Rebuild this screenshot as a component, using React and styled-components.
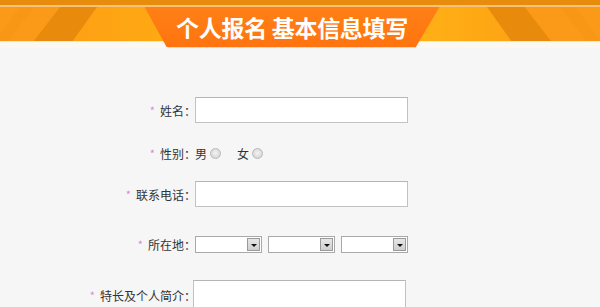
import React from 'react'
import styled, { createGlobalStyle } from 'styled-components'

const GlobalStyle = createGlobalStyle`
  html, body {
    margin: 0;
    padding: 0;
    background: #f6f6f6;
  }
  body {
    font-family: "Noto Sans CJK SC", "Liberation Sans", sans-serif;
    font-size: 12px;
    color: #333;
  }
`

// header
const Header = styled.header`
  display: grid;
  height: 48px;
  overflow: hidden;
`
const Band = styled.svg`
  grid-area: 1 / 1;
  display: block;
`
const TabRow = styled.div`
  grid-area: 1 / 1;
  display: flex;
  justify-content: center;
  padding-top: 7px;
`
const Tab = styled.div`
  width: 295px;
  height: 40px;
  margin-right: 16px;
  background: linear-gradient(#ff8016, #ff7410);
  clip-path: polygon(0 0, 100% 0, 92% 100%, 7.5% 100%);
  display: flex;
  align-items: center;
  justify-content: center;
  box-sizing: border-box;
  color: #fff;
  font-size: 23px;
  font-weight: bold;
  letter-spacing: -0.3px;
  white-space: pre;
`

// form
const Form = styled.div`
  padding-top: 49px;
`
const Row = styled.div`
  display: flex;
  align-items: ${(p) => p.align || 'center'};
  height: ${(p) => p.h}px;
  margin-top: ${(p) => p.mt || 0}px;
`
const Label = styled.div`
  width: 196px;
  margin-right: -1px;
  text-align: right;
  white-space: nowrap;
  padding-top: ${(p) => p.pt || 0}px;
`
const Star = styled.span`
  color: #d58ad5;
  font-size: 11px;
  margin-right: 5px;
  position: relative;
  top: -1px;
`
const TextInput = styled.div`
  width: 211px;
  height: 24px;
  background: #fff;
  border: 1px solid #c2c2c2;
  border-top-color: #b5b5b5;
`
const TextArea = styled.div`
  width: 211px;
  height: 40px;
  margin-left: -2px;
  background: #fff;
  border: 1px solid #c2c2c2;
  border-top-color: #b5b5b5;
`
const Radios = styled.div`
  display: flex;
  align-items: center;
`
const RadioText = styled.span`
  margin-left: ${(p) => p.ml || 0}px;
`
const Radio = styled.span`
  width: 9px;
  height: 9px;
  margin-left: 3px;
  border-radius: 50%;
  border: 1px solid #b9b9b9;
  background: radial-gradient(circle at 50% 45%, #f4f4f4 0, #e2e2e2 45%, #cfcfcf 100%);
`
const Selects = styled.div`
  display: flex;
  gap: 6px;
`
const SelectBox = styled.div`
  width: 64px;
  height: 15px;
  background: #fff;
  border: 1px solid #a9a9a9;
  display: flex;
  justify-content: flex-end;
  align-items: center;
  padding-right: 1px;
`
const SelectBtn = styled.span`
  width: 11px;
  height: 11px;
  border: 1px solid #9a9a9a;
  background: linear-gradient(#e6e6e6, #cfcfcf);
  display: flex;
  align-items: center;
  justify-content: center;
  &::after {
    content: '';
    border-left: 3px solid transparent;
    border-right: 3px solid transparent;
    border-top: 3px solid #111;
    margin-top: 1px;
  }
`

function Banner() {
  return (
    <Band width="600" height="48" viewBox="0 0 600 48">
      <defs>
        <linearGradient id="bg" x1="0" x2="1" y1="0" y2="0">
          <stop offset="0" stopColor="#fd9b16" />
          <stop offset="0.3" stopColor="#ffaa12" />
          <stop offset="0.7" stopColor="#ffb015" />
          <stop offset="1" stopColor="#fd9914" />
        </linearGradient>
      </defs>
      <rect x="0" y="0" width="600" height="48" fill="#fbf8f1" />
      <rect x="0" y="0" width="600" height="6" fill="#e88c0e" />
      <rect x="0" y="5" width="600" height="2" fill="#f6c27a" />
      <rect x="0" y="7" width="600" height="35" fill="url(#bg)" />
      {/* left stripes */}
      <polygon points="0,7 60,7 33,42 0,42" fill="#fb9a18" />
      <polygon points="20,7 34,7 8,42 -6,42" fill="#f79516" opacity="0.6" />
      <polygon points="60,7 97,7 72,42 33,42" fill="#e88b0c" />
      {/* right stripes */}
      <polygon points="487,7 525,7 552,42 512,42" fill="#e88b0c" />
      <polygon points="525,7 600,7 600,42 552,42" fill="#fb9a18" />
      <polygon points="560,7 575,7 602,42 587,42" fill="#f79516" opacity="0.6" />
      <rect x="0" y="41" width="600" height="1" fill="#fde9b8" />
      {/* tab shadow */}
      <polygon points="167,47 417,47 415,48 169,48" fill="#e8d7c4" />
    </Band>
  )
}

export default function App() {
  return (
    <>
      <GlobalStyle />
      <Header>
        <Banner />
        <TabRow>
          <Tab>{'个人报名 基本信息填写'}</Tab>
        </TabRow>
      </Header>
      <Form>
        <Row h={26}>
          <Label><Star>*</Star>姓名：</Label>
          <TextInput />
        </Row>
        <Row h={20} mt={20}>
          <Label><Star>*</Star>性别：</Label>
          <Radios>
            <RadioText>男</RadioText>
            <Radio />
            <RadioText ml={16}>女</RadioText>
            <Radio />
          </Radios>
        </Row>
        <Row h={26} mt={18}>
          <Label><Star>*</Star>联系电话：</Label>
          <TextInput />
        </Row>
        <Row h={17} mt={29}>
          <Label><Star>*</Star>所在地：</Label>
          <Selects>
            <SelectBox><SelectBtn /></SelectBox>
            <SelectBox><SelectBtn /></SelectBox>
            <SelectBox><SelectBtn /></SelectBox>
          </Selects>
        </Row>
        <Row h={40} mt={27} align="flex-start">
          <Label pt={7}><Star>*</Star>特长及个人简介：</Label>
          <TextArea />
        </Row>
      </Form>
    </>
  )
}
